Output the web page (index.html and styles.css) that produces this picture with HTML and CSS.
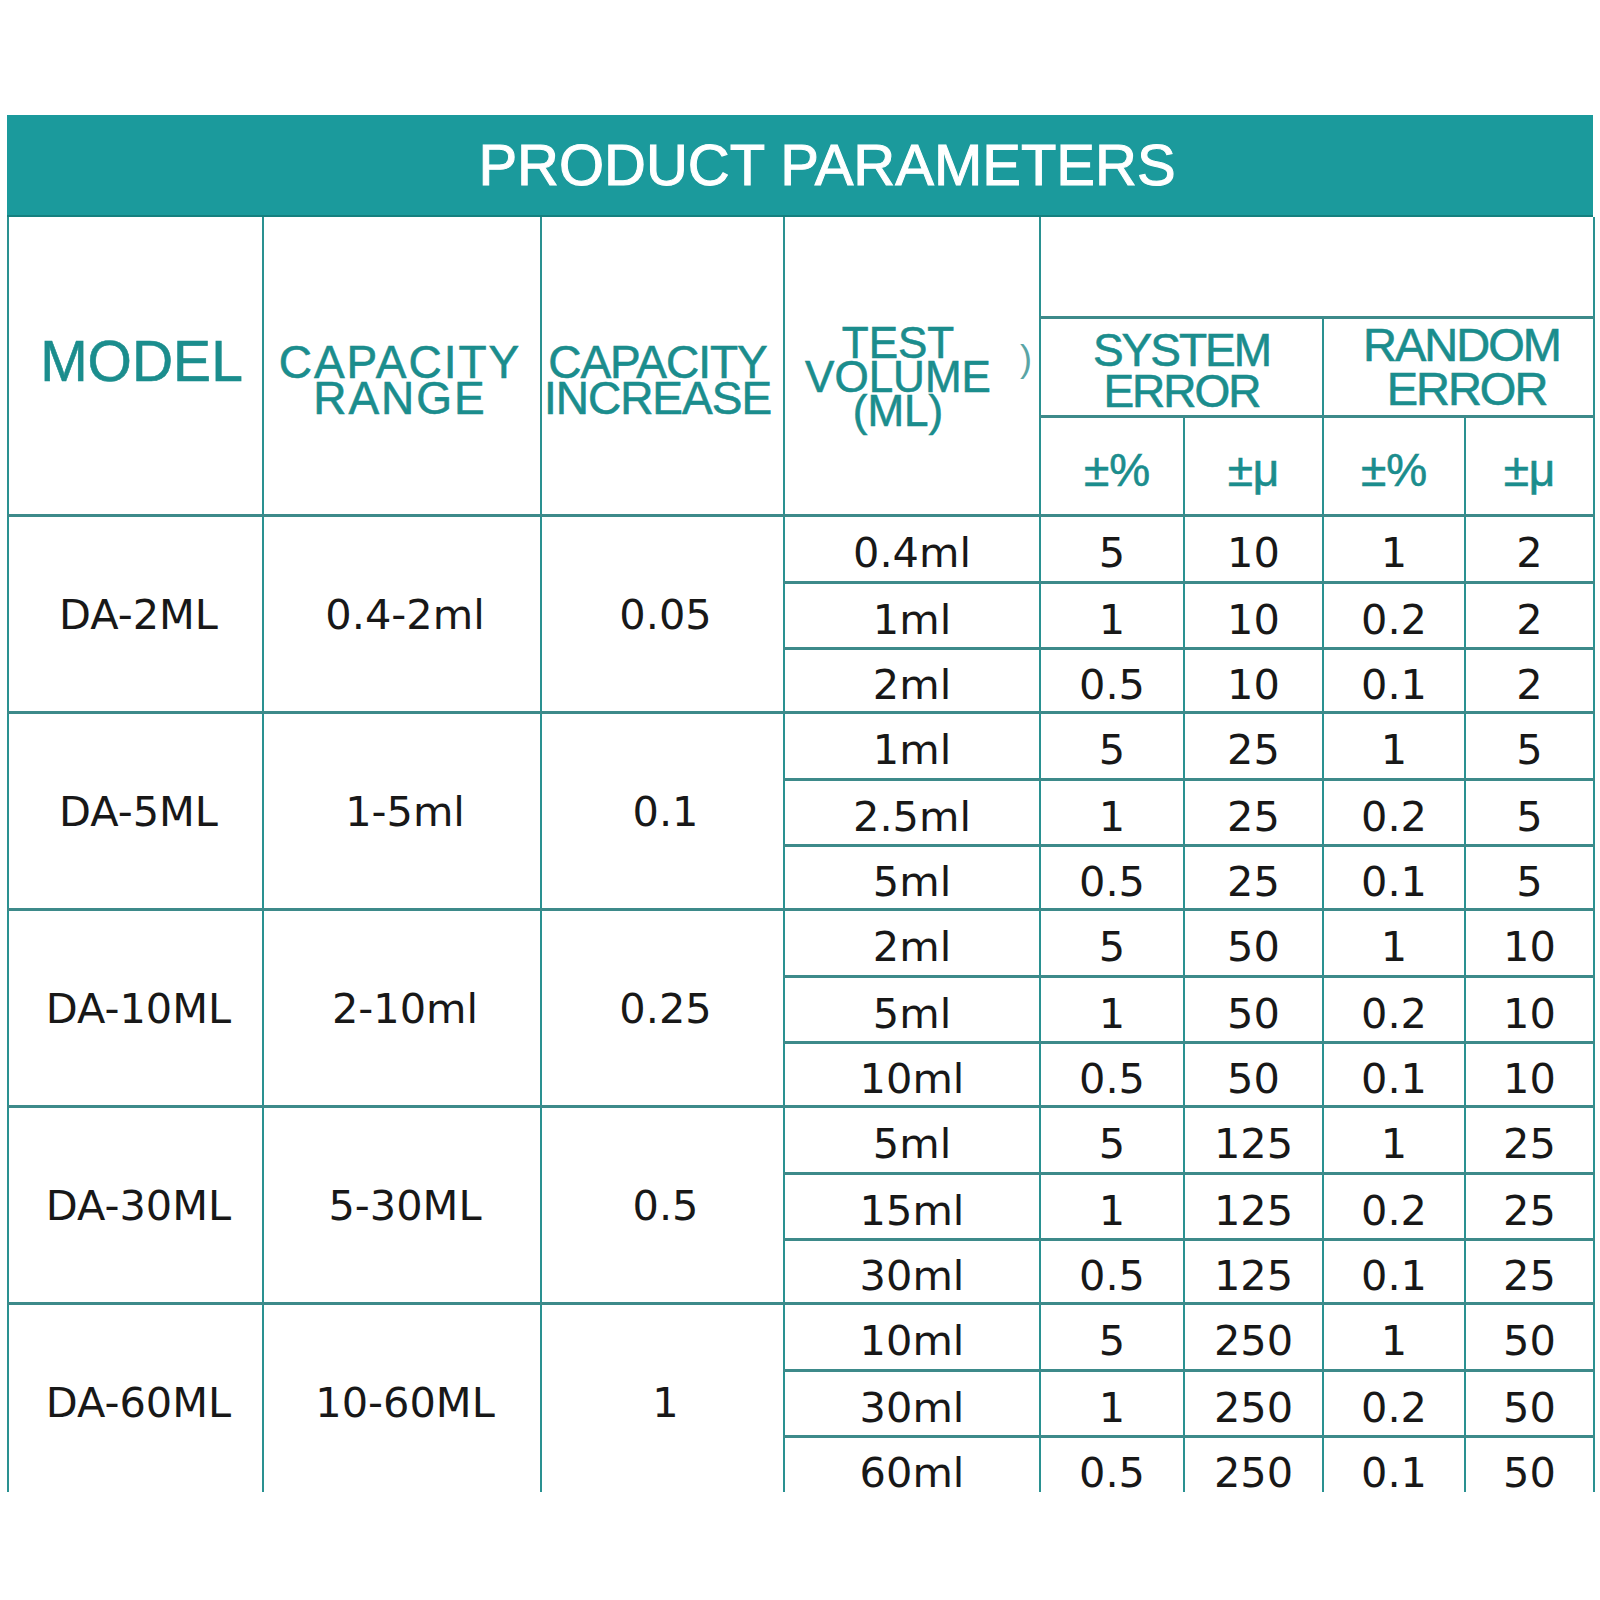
FILE: index.html
```html
<!DOCTYPE html>
<html lang="en">
<head>
<meta charset="utf-8">
<title>Product Parameters</title>
<link rel="stylesheet" href="styles.css">
</head>
<body>
<div class="sheet">
  <div class="banner"><h1 class="title">PRODUCT PARAMETERS</h1></div>
  <table class="params">
    <colgroup>
      <col class="c1"><col class="c2"><col class="c3"><col class="c4">
      <col class="c5"><col class="c6"><col class="c7"><col class="c8">
    </colgroup>
    <thead>
      <tr class="ha">
        <th rowspan="3" class="hd"><div class="model">MODEL</div></th>
        <th rowspan="3" class="hd"><div class="two range">CAPACITY<br>RANGE</div></th>
        <th rowspan="3" class="hd"><div class="two incr">CAPACITY<br>INCREASE</div></th>
        <th rowspan="3" class="hd test"><div class="three">TEST<br>VOLUME<br>(ML)</div><span class="stray">)</span></th>
        <th colspan="4" class="hd"></th>
      </tr>
      <tr class="hb">
        <th colspan="2" class="hd"><div class="err sys"><span class="ln">SYSTEM</span><span class="ln">ERROR</span></div></th>
        <th colspan="2" class="hd"><div class="err rnd"><span class="ln">RANDOM</span><span class="ln second">ERROR</span></div></th>
      </tr>
      <tr class="hc">
        <th class="hd"><div class="sym shift">±%</div></th>
        <th class="hd"><div class="sym">±μ</div></th>
        <th class="hd"><div class="sym">±%</div></th>
        <th class="hd"><div class="sym">±μ</div></th>
      </tr>
    </thead>
    <tbody>
      <tr class="r1"><td rowspan="3" class="grp">DA-2ML</td><td rowspan="3" class="grp">0.4-2ml</td><td rowspan="3" class="grp">0.05</td><td>0.4ml</td><td>5</td><td>10</td><td>1</td><td>2</td></tr>
      <tr class="r2"><td>1ml</td><td>1</td><td>10</td><td>0.2</td><td>2</td></tr>
      <tr class="r3"><td>2ml</td><td>0.5</td><td>10</td><td>0.1</td><td>2</td></tr>

      <tr class="r1"><td rowspan="3" class="grp">DA-5ML</td><td rowspan="3" class="grp">1-5ml</td><td rowspan="3" class="grp">0.1</td><td>1ml</td><td>5</td><td>25</td><td>1</td><td>5</td></tr>
      <tr class="r2"><td>2.5ml</td><td>1</td><td>25</td><td>0.2</td><td>5</td></tr>
      <tr class="r3"><td>5ml</td><td>0.5</td><td>25</td><td>0.1</td><td>5</td></tr>

      <tr class="r1"><td rowspan="3" class="grp">DA-10ML</td><td rowspan="3" class="grp">2-10ml</td><td rowspan="3" class="grp">0.25</td><td>2ml</td><td>5</td><td>50</td><td>1</td><td>10</td></tr>
      <tr class="r2"><td>5ml</td><td>1</td><td>50</td><td>0.2</td><td>10</td></tr>
      <tr class="r3"><td>10ml</td><td>0.5</td><td>50</td><td>0.1</td><td>10</td></tr>

      <tr class="r1"><td rowspan="3" class="grp">DA-30ML</td><td rowspan="3" class="grp">5-30ML</td><td rowspan="3" class="grp">0.5</td><td>5ml</td><td>5</td><td>125</td><td>1</td><td>25</td></tr>
      <tr class="r2"><td>15ml</td><td>1</td><td>125</td><td>0.2</td><td>25</td></tr>
      <tr class="r3"><td>30ml</td><td>0.5</td><td>125</td><td>0.1</td><td>25</td></tr>

      <tr class="r1"><td rowspan="3" class="grp">DA-60ML</td><td rowspan="3" class="grp">10-60ML</td><td rowspan="3" class="grp">1</td><td>10ml</td><td>5</td><td>250</td><td>1</td><td>50</td></tr>
      <tr class="r2"><td>30ml</td><td>1</td><td>250</td><td>0.2</td><td>50</td></tr>
      <tr class="r3"><td>60ml</td><td>0.5</td><td>250</td><td>0.1</td><td>50</td></tr>
    </tbody>
  </table>
</div>
</body>
</html>
```

FILE: styles.css
```css
html, body {
  margin: 0;
  padding: 0;
  background: #ffffff;
}

.sheet {
  margin: 115px 0 0 7px;
  width: 1586px;
  height: 1377px;
  clip-path: inset(0 -6px 0 -6px);
}

.banner {
  height: 102px;
  box-sizing: border-box;
  background: #1b9a9c;
  border-bottom: 2px solid #15807f;
  display: flex;
  align-items: center;
  justify-content: center;
  padding-left: 54px;
}

.title {
  margin: 0;
  font-family: "Liberation Sans", Arial, sans-serif;
  font-weight: normal;
  font-size: 58px;
  line-height: 1;
  color: #ffffff;
  -webkit-text-stroke: 1px #ffffff;
}

.params {
  border-collapse: collapse;
  table-layout: fixed;
  width: 1586px;
}

.c1 { width: 255px; }
.c2 { width: 278px; }
.c3 { width: 243px; }
.c4 { width: 256px; }
.c5 { width: 144px; }
.c6 { width: 139px; }
.c7 { width: 142px; }
.c8 { width: 129px; }

.params th,
.params td {
  padding: 0;
  text-align: center;
  vertical-align: middle;
  border-left: 2px solid #2a9191;
  border-right: 2px solid #2a9191;
  border-top: 3px solid #3d8a8a;
  border-bottom: 3px solid #3d8a8a;
}

.params thead tr:first-child th {
  border-top: none;
}

.ha { height: 100px; }
.hb { height: 99px; }
.hc { height: 99px; }

.r1 { height: 67px; }
.r2 { height: 66px; }
.r3 { height: 64px; }

.hd {
  font-family: "Liberation Sans", Arial, sans-serif;
  font-weight: normal;
  color: #1b8d8d;
  -webkit-text-stroke: 0.6px #1b8d8d;
}

.model {
  font-size: 57px;
  line-height: 1.15;
  padding-bottom: 6px;
  padding-left: 12px;
}

.two {
  font-size: 46px;
  line-height: 36px;
  padding-top: 30px;
}

.range {
  letter-spacing: 2px;
  padding-right: 4px;
}

.incr {
  letter-spacing: -1px;
  padding-right: 10px;
}

.test { position: relative; }

.three {
  font-size: 44px;
  line-height: 34px;
  padding-top: 24px;
  padding-right: 28px;
}

.stray {
  position: absolute;
  right: 7px;
  top: 124px;
  font-size: 36px;
  line-height: 1;
  color: #5aa5a5;
  -webkit-text-stroke: 0;
}

.err {
  font-size: 46px;
  line-height: 41px;
  letter-spacing: -2px;
  padding-top: 8px;
}

.ln { display: block; }

.rnd {
  font-size: 47px;
  line-height: 44px;
  padding-top: 0;
  padding-left: 6px;
}

.second { padding-left: 10px; }

.sym {
  font-size: 46px;
  line-height: 1;
  padding-top: 8px;
}

.shift { padding-left: 10px; }

.params td {
  font-family: "DejaVu Sans", Verdana, sans-serif;
  font-size: 41.5px;
  color: #181818;
  line-height: 1;
  padding-top: 9px;
}

.params td.grp {
  padding-top: 2px;
  padding-left: 6px;
}
```
